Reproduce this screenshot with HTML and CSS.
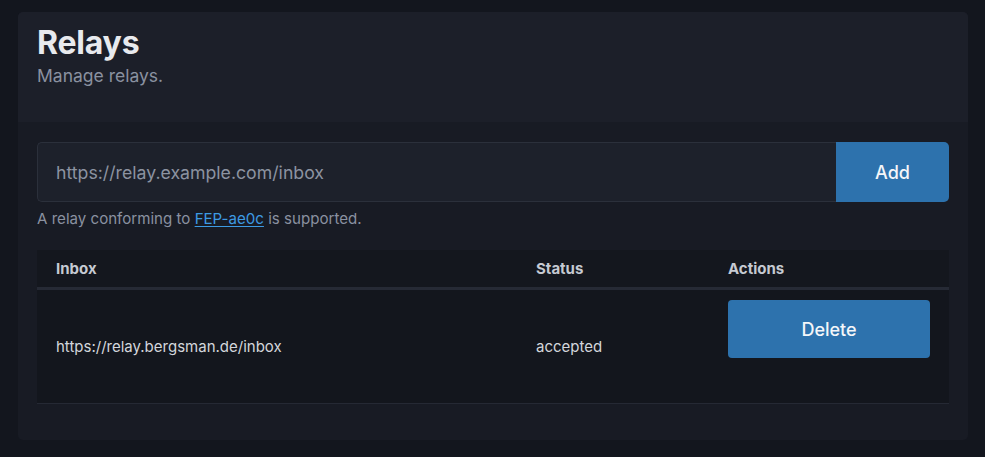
FILE: index.html
```html
<!DOCTYPE html>
<html>
<head>
<meta charset="utf-8">
<link rel="stylesheet" href="styles.css">
</head>
<body>
<div class="card">
  <div class="card-header">
    <h1 class="title">Relays</h1>
    <p class="subtitle">Manage relays.</p>
  </div>
  <div class="card-body">
    <form class="add-form">
      <input class="url-input" type="text" placeholder="https://relay.example.com/inbox">
      <button class="btn btn-add" type="button">Add</button>
    </form>
    <p class="help">A relay conforming to <a class="link" href="#">FEP-ae0c</a> is supported.</p>
    <div class="table">
      <div class="row head">
        <div class="cell">Inbox</div>
        <div class="cell">Status</div>
        <div class="cell">Actions</div>
      </div>
      <div class="row body-row">
        <div class="cell">https://relay.bergsman.de/inbox</div>
        <div class="cell">accepted</div>
        <div class="cell actions"><button class="btn btn-delete" type="button">Delete</button></div>
      </div>
    </div>
  </div>
</div>
</body>
</html>
```
FILE: styles.css
```css
html, body {
  margin: 0;
  padding: 0;
  background: #13161e;
  font-family: Inter, "Noto Sans", sans-serif;
}
body {
  padding: 12px 17px 17px 18px;
}
.card {
  width: 950px;
  height: 428px;
  background: #181b24;
  border-radius: 5px;
  overflow: hidden;
  box-sizing: border-box;
}
.card-header {
  background: #1c1f29;
  height: 110px;
  box-sizing: border-box;
  padding: 14px 19px 0;
}
.title {
  margin: 0;
  font-size: 32px;
  line-height: 34px;
  font-weight: 700;
  color: #e8eaee;
  letter-spacing: -0.2px;
}
.subtitle {
  margin: 6px 0 0;
  font-size: 17.5px;
  line-height: 20px;
  color: #8a91a0;
}
.card-body {
  padding: 20px 19px 0;
}
.add-form {
  display: flex;
  height: 60px;
  margin: 0;
}
.url-input {
  flex: 1;
  box-sizing: border-box;
  height: 60px;
  background: #1d212b;
  border: 1px solid #2b303b;
  border-right: none;
  border-radius: 5px 0 0 5px;
  padding: 0 18px;
  font-family: inherit;
  font-size: 17.7px;
  color: #e0e3e8;
  outline: none;
}
.url-input::placeholder {
  color: #8c93a1;
}
.btn {
  border: none;
  background: #2d72ad;
  color: #f4f6f9;
  font-family: inherit;
  font-size: 18px;
  font-weight: 500;
  cursor: pointer;
}
.btn-add {
  width: 113px;
  height: 60px;
  border-radius: 0 5px 5px 0;
}
.help {
  margin: 8px 0 0;
  font-size: 15.1px;
  line-height: 18px;
  color: #8a91a0;
}
.link {
  color: #3d9ae2;
  text-decoration: underline;
  text-underline-offset: 2px;
}
.table {
  margin-top: 22px;
}
.row {
  display: grid;
  grid-template-columns: 480px 192px 240px;
  align-items: center;
}
.cell {
  padding: 0 19px;
  font-size: 15px;
  color: #d3d6dc;
}
.head {
  height: 37px;
  background: #14171e;
  border-bottom: 3px solid #262a35;
}
.head .cell {
  font-weight: 700;
  color: #c6cad2;
}
.body-row {
  height: 113px;
  background: #13161d;
  border-bottom: 1px solid #252934;
}
.btn-delete {
  display: block;
  width: 202px;
  height: 58px;
  border-radius: 4px;
  margin-bottom: 35px;
}
```
